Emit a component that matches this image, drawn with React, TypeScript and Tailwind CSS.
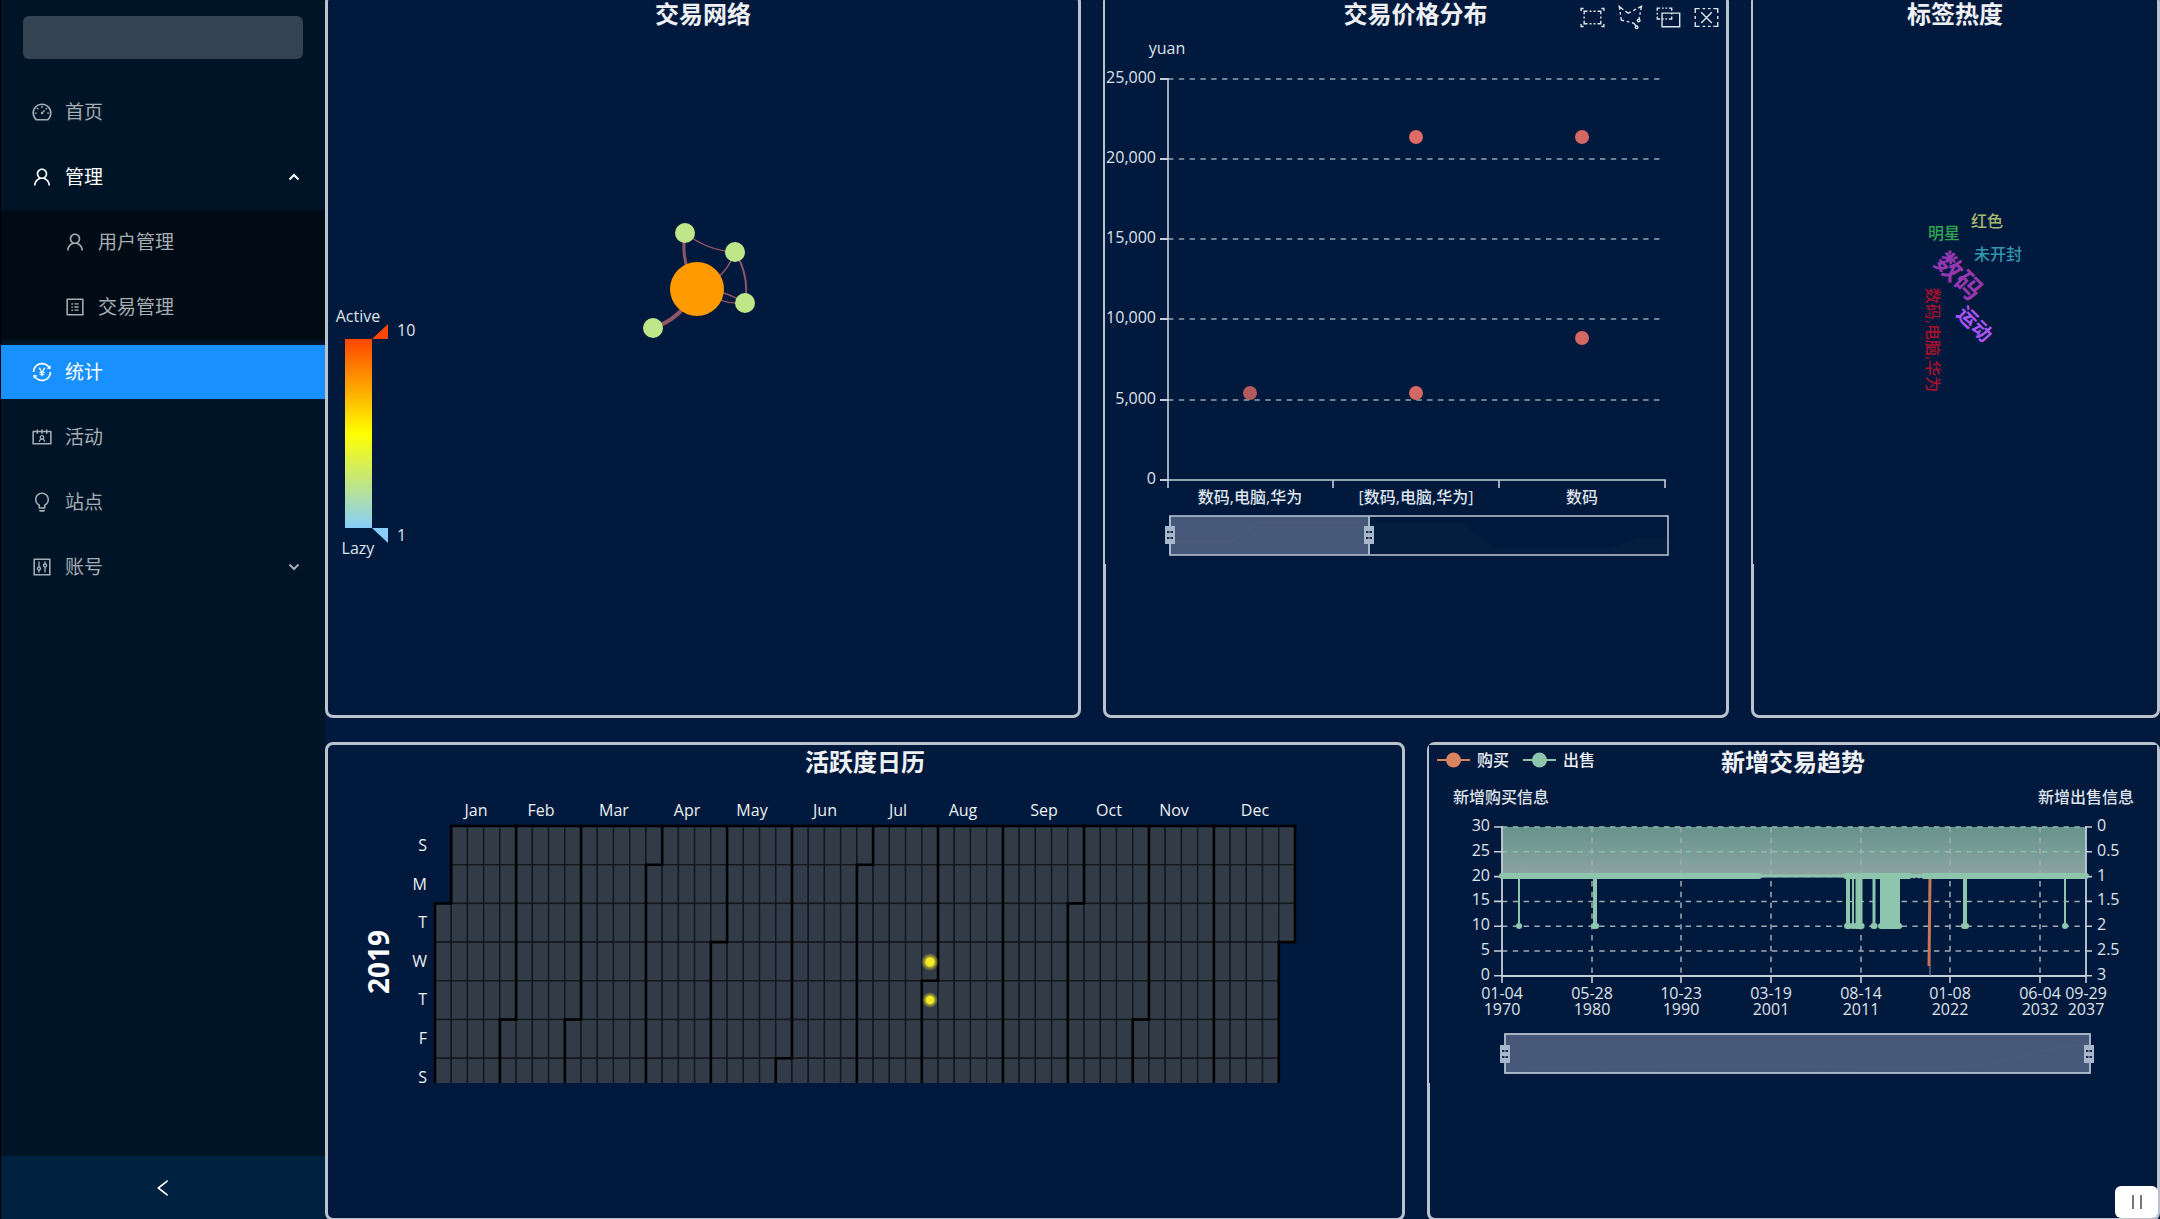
import type { ReactNode } from "react";
import type { IconType } from "react-icons";
import {
  AiOutlineBulb,
  AiOutlineContacts,
  AiOutlineControl,
  AiOutlineDashboard,
  AiOutlineLeft,
  AiOutlineProfile,
  AiOutlineTransaction,
  AiOutlineUser,
} from "react-icons/ai";

/* ---------- sidebar ---------- */

function Chevron({ up }: { up?: boolean }) {
  return (
    <svg viewBox="0 0 12 8" className="ml-auto h-2 w-3" fill="none" stroke="currentColor" strokeWidth="2">
      <path d={up ? "M1.5 6.5 6 2l4.5 4.5" : "M1.5 1.5 6 6l4.5-4.5"} />
    </svg>
  );
}

type ItemProps = {
  icon: IconType;
  label: string;
  nested?: boolean;
  selected?: boolean;
  open?: boolean;
  expandable?: boolean;
};

function MenuItem({ icon: Icon, label, nested, selected, open, expandable }: ItemProps) {
  const tone = selected ? "bg-[#1890ff] text-white" : open ? "text-white" : "text-[#a6adb4]";
  const inset = nested ? "pl-[63px]" : "pl-[30px]";
  const cls = `mt-[5px] mb-[6px] flex h-[54px] w-full items-center gap-3 pr-[25px] text-[19px] ${inset} ${tone}`;
  const body = (
    <>
      <Icon className="size-[22px] shrink-0" />
      <span>{label}</span>
      {expandable && <Chevron up={open} />}
    </>
  );
  return expandable ? (
    <button type="button" aria-expanded={!!open} className={cls}>
      {body}
    </button>
  ) : (
    <a href="#" className={cls}>
      {body}
    </a>
  );
}

function Sidebar() {
  return (
    <aside className="flex w-[325px] shrink-0 flex-col border-l border-black bg-[#001427]">
      <div className="px-[22px] pt-4">
        <input aria-label="搜索" className="h-[43px] w-full rounded-md bg-[#344351] px-3 text-white outline-none" />
      </div>
      <nav className="mt-[21px] flex flex-col">
        <MenuItem icon={AiOutlineDashboard} label="首页" />
        <MenuItem icon={AiOutlineUser} label="管理" expandable open />
        <div className="flex flex-col bg-[#000b15]">
          <MenuItem icon={AiOutlineUser} label="用户管理" nested />
          <MenuItem icon={AiOutlineProfile} label="交易管理" nested />
        </div>
        <MenuItem icon={AiOutlineTransaction} label="统计" selected />
        <MenuItem icon={AiOutlineContacts} label="活动" />
        <MenuItem icon={AiOutlineBulb} label="站点" />
        <MenuItem icon={AiOutlineControl} label="账号" expandable />
      </nav>
      <button
        type="button"
        aria-label="收起菜单"
        className="mt-auto flex h-[63px] items-center justify-center bg-[#002140] text-white"
      >
        <AiOutlineLeft className="size-[22px]" />
      </button>
    </aside>
  );
}

/* ---------- card ---------- */

type CardProps = {
  title: string;
  left?: ReactNode;
  right?: ReactNode;
  overlap?: boolean;
  children: ReactNode;
};

function Card({ title, left, right, overlap, children }: CardProps) {
  return (
    <section className="min-w-0 rounded-lg border-3 border-[#bac2cd]">
      <div className={overlap ? "-ml-px bg-[#00193c]" : ""}>
        <header className="grid h-[34px] grid-cols-[1fr_auto_1fr] items-center">
          <div>{left}</div>
          <h2 className="text-2xl leading-7 font-bold text-[#eef0f4]">{title}</h2>
          <div>{right}</div>
        </header>
        {children}
      </div>
    </section>
  );
}

type LabelProps = {
  x: number;
  y: number;
  anchor?: "start" | "middle" | "end";
  fill?: string;
  children: ReactNode;
};

/* 16px chart label, vertically centred on y */
function Label({ x, y, anchor = "middle", fill = "#dfe4ec", children }: LabelProps) {
  return (
    <text x={x} y={y + 6} textAnchor={anchor} fill={fill} fontSize="16" fontWeight="500">
      {children}
    </text>
  );
}

function Grip({ x, y }: { x: number; y: number }) {
  return (
    <g>
      <rect x={x - 5} y={y - 9} width="10" height="18" fill="#a7b7cc" />
      <path d={`M${x - 3} ${y - 3}h2.5m1 0h2.5M${x - 3} ${y + 3}h2.5m1 0h2.5`} stroke="#1c2c48" strokeWidth="2" />
    </g>
  );
}

/* ---------- network ---------- */

const leafNodes = [
  [357, 202],
  [407, 221],
  [417, 272],
  [325, 297],
];

function NetworkChart() {
  return (
    <svg viewBox="0 0 750 533" className="w-full">
      <defs>
        <linearGradient id="heat" x1="0" y1="0" x2="0" y2="1">
          <stop offset="0" stopColor="#ff4500" />
          <stop offset="0.5" stopColor="#ffff00" />
          <stop offset="1" stopColor="#87cefa" />
        </linearGradient>
      </defs>
      <Label x={30} y={285}>Active</Label>
      <rect x="17" y="308" width="27" height="189" fill="url(#heat)" />
      <path d="M44 308h16v-15z" fill="#ff4500" />
      <path d="M44 497h16v15z" fill="#87cefa" />
      <Label x={69} y={299} anchor="start">10</Label>
      <Label x={69} y={504} anchor="start">1</Label>
      <Label x={30} y={517}>Lazy</Label>
      <g fill="none" stroke="#8f5666">
        <path d="M357 202Q380 220 407 221" strokeWidth="1.5" />
        <path d="M407 221Q422 245 417 272" strokeWidth="2" />
        <path d="M369 258Q396 250 407 221" strokeWidth="1.5" />
        <path d="M369 258Q395 258 417 272" strokeWidth="1.5" />
        <path d="M369 258Q392 274 417 272" strokeWidth="1.5" />
        <path d="M369 258Q352 232 357 202" strokeWidth="3" />
        <path d="M369 258Q353 288 325 297" strokeWidth="4" />
      </g>
      {leafNodes.map(([x, y]) => (
        <circle key={x} cx={x} cy={y} r="10" fill="#bfe78a" />
      ))}
      <circle cx="369" cy="258" r="27" fill="#ff9a00" />
    </svg>
  );
}

/* ---------- price scatter ---------- */

const brushTools = [
  {
    name: "矩形选择",
    box: "0 -1 90 72",
    d: "M0.4,10V-0.2h9.8 M89.6,10V-0.2h-9.8 M0.4,60v10.2h9.8 M89.6,60v10.2h-9.8 M12.3,22.4V10.5h13.1 M33.6,10.5h7.8 M49.1,10.5h7.8 M77.5,22.4V10.5h-13 M12.3,31.1v8.2 M77.7,31.1v8.2 M12.3,47.6v11.9h13.1 M33.6,59.5h7.6 M49.1,59.5h7.7 M77.5,47.6v11.9h-13",
  },
  {
    name: "圈选",
    box: "9 4 54 54",
    d: "M55.2,34.9c1.7,0,3.1,1.4,3.1,3.1s-1.4,3.1-3.1,3.1s-3.1-1.4-3.1-3.1S53.5,34.9,55.2,34.9z M50.4,51c1.7,0,3.1,1.4,3.1,3.1c0,1.7-1.4,3.1-3.1,3.1c-1.7,0-3.1-1.4-3.1-3.1C47.3,52.4,48.7,51,50.4,51z M55.6,37.1l1.5-7.8 M60.1,13.5l1.6-8.7l-7.8,4 M59,19l-1,5.3 M24,16.1l6.4,4.9l6.4-3.3 M48.5,11.6l-5.9,3.1 M19.1,12.8L9.7,5.1l1.1,7.7 M13.4,29.8l1,7.3l6.6,1.6 M11.6,18.4l1,6.1 M27.3,40.2l6.1,1.6 M49.9,52.1l-5.6-7.6l-4.9-1.2",
  },
  {
    name: "保持选择",
    box: "3 0 82 69",
    d: "M4,10.5V1h10.3 M20.7,1h6.1 M33,1h6.1 M55.4,10.5V1H45.2 M4,17.3v6.6 M55.6,17.3v6.6 M4,30.5V40h10.3 M20.7,40h6.1 M33,40h6.1 M55.4,30.5V40H45.2 M21,18.9h62.9v48.6H21V18.9z",
  },
  {
    name: "清除选择",
    box: "4 3 67 54",
    d: "M22,14.7l30.9,31 M52.9,14.7L22,45.7 M4.7,16.8V4.2h13.1 M26,4.2h7.8 M41.6,4.2h7.8 M70.3,16.8V4.2H57.2 M4.7,25.9v8.6 M70.3,25.9v8.6 M4.7,43.2v12.6h13.1 M26,55.8h7.8 M41.6,55.8h7.8 M70.3,43.2v12.6H57.2",
  },
];

function BrushToolbox() {
  return (
    <div className="flex justify-end gap-[15px] pt-1.5 pr-2">
      {brushTools.map((t) => (
        <button key={t.name} type="button" aria-label={t.name} className="size-[23px]">
          <svg viewBox={t.box} className="size-full overflow-visible" fill="none" stroke="#dfe4ec">
            <path d={t.d} vectorEffect="non-scaling-stroke" strokeWidth="1.4" />
          </svg>
        </button>
      ))}
    </div>
  );
}

const prices = ["25,000", "20,000", "15,000", "10,000", "5,000", "0"];
const priceY = [48, 128, 208, 288, 369, 449];
const categories = ["数码,电脑,华为", "[数码,电脑,华为]", "数码"];
const categoryX = [145, 311, 477];
const deals = [
  [145, 362, 0.8],
  [311, 362, 0.95],
  [311, 106, 1],
  [477, 307, 0.95],
  [477, 106, 0.95],
];

function PriceChart() {
  return (
    <svg viewBox="0 0 621 533" className="w-full">
      <Label x={62} y={17}>yuan</Label>
      {prices.map((p, i) => (
        <g key={p}>
          <Label x={51} y={priceY[i] - 2} anchor="end">{p}</Label>
          <path d={`M55 ${priceY[i]}h8`} stroke="#c6cdd8" strokeWidth="2" />
          {i < 5 && (
            <path
              d={`M63 ${priceY[i]}H558`}
              stroke="#98a2b0"
              strokeWidth="1.5"
              strokeDasharray="5.4 5.4"
            />
          )}
        </g>
      ))}
      <path d="M63 47V457M63 449H560V457M228 449v8M394 449v8" fill="none" stroke="#c6cdd8" strokeWidth="1.6" />
      {categories.map((c, i) => (
        <Label key={c} x={categoryX[i]} y={466}>{c}</Label>
      ))}
      {deals.map(([x, y, o], i) => (
        <circle key={i} cx={x} cy={y} r="7" fill="#dd6b66" fillOpacity={o} />
      ))}
      <path
        d="M65 511H126L153 492H358L389 517H505L532 507H562V524H65z"
        fill="#ffffff"
        fillOpacity="0.02"
      />
      <rect x="65" y="485" width="199" height="39" fill="#46597a" />
      <path d="M65 511H126L153 492H264" fill="none" stroke="#4e5f7b" />
      <rect x="65" y="485" width="498" height="39" fill="none" stroke="#b3bfcf" strokeWidth="1.6" />
      <path d="M65 485v39M264 485v39" stroke="#a7b7cc" strokeWidth="2" />
      <Grip x={65} y={504} />
      <Grip x={264} y={504} />
    </svg>
  );
}

/* ---------- word cloud ---------- */

const words = [
  { text: "红色", x: 234, y: 190, size: 16, angle: 0, color: "#a8b86c", weight: 500 },
  { text: "明星", x: 191, y: 202, size: 16, angle: 0, color: "#2fa653", weight: 500 },
  { text: "未开封", x: 245, y: 223, size: 16, angle: 0, color: "#3296ae", weight: 500 },
  { text: "数码", x: 206, y: 245, size: 27, angle: 45, color: "#9537b0", weight: 700 },
  { text: "运动", x: 222, y: 293, size: 20, angle: 45, color: "#ab55f7", weight: 700 },
  { text: "数码,电脑,华为", x: 180, y: 309, size: 16, angle: 90, color: "#a8122d", weight: 500 },
];

function WordCloud() {
  return (
    <svg viewBox="0 0 404 533" className="w-full">
      {words.map((w) => (
        <text
          key={w.text}
          transform={`translate(${w.x} ${w.y}) rotate(${w.angle})`}
          y={w.size * 0.37}
          textAnchor="middle"
          fontSize={w.size}
          fontWeight={w.weight}
          fill={w.color}
        >
          {w.text}
        </text>
      ))}
    </svg>
  );
}

/* ---------- activity calendar ---------- */

const CELL_W = 860 / 53;
const CELL_H = 38.7;
const ORIGIN_X = 107;
const ORIGIN_Y = 47;
const FIRST_WEEKDAY = 2;
const monthNames: [string, number][] = [
  ["Jan", 148],
  ["Feb", 213],
  ["Mar", 286],
  ["Apr", 359],
  ["May", 424],
  ["Jun", 497],
  ["Jul", 570],
  ["Aug", 635],
  ["Sep", 716],
  ["Oct", 781],
  ["Nov", 846],
  ["Dec", 927],
];
const monthStarts = [0, 31, 59, 90, 120, 151, 181, 212, 243, 273, 304, 334, 365];
const weekdays = ["S", "M", "T", "W", "T", "F", "S"];

function monthEdge(day: number) {
  const slot = day + FIRST_WEEKDAY;
  const x = ORIGIN_X + Math.floor(slot / 7) * CELL_W;
  const row = slot % 7;
  const bottom = ORIGIN_Y + 7 * CELL_H;
  if (row === 0) return `M${x} ${ORIGIN_Y}V${bottom}`;
  return `M${x + CELL_W} ${ORIGIN_Y}V${ORIGIN_Y + row * CELL_H}H${x}V${bottom}`;
}

function CalendarChart() {
  const days = Array.from({ length: 365 }, (_, i) => i + FIRST_WEEKDAY);
  return (
    <svg viewBox="0 0 1074 304" className="w-full">
      <defs>
        <radialGradient id="glow">
          <stop offset="0" stopColor="#f4e925" />
          <stop offset="0.45" stopColor="#f4e925" />
          <stop offset="0.6" stopColor="#f4e925" stopOpacity="0.55" />
          <stop offset="1" stopColor="#f4e925" stopOpacity="0" />
        </radialGradient>
      </defs>
      {monthNames.map(([m, x]) => (
        <Label key={m} x={x} y={31} fill="#eef0f4">{m}</Label>
      ))}
      {weekdays.map((d, i) => (
        <Label key={i} x={99} y={66 + i * 38.6} anchor="end" fill="#eef0f4">{d}</Label>
      ))}
      <text
        transform="translate(51 183) rotate(-90)"
        y="10"
        textAnchor="middle"
        fontSize="28"
        fontWeight="700"
        fill="#ffffff"
      >
        2019
      </text>
      <g fill="#323c48" stroke="#12171c" strokeWidth="1.4">
        {days.map((s) => (
          <rect
            key={s}
            x={ORIGIN_X + Math.floor(s / 7) * CELL_W}
            y={ORIGIN_Y + (s % 7) * CELL_H}
            width={CELL_W}
            height={CELL_H}
          />
        ))}
      </g>
      <g fill="none" stroke="#000000" strokeWidth="2.6" strokeLinecap="square">
        {monthStarts.map((d) => (
          <path key={d} d={monthEdge(d)} />
        ))}
        <path d={`M${ORIGIN_X + CELL_W} ${ORIGIN_Y}H${ORIGIN_X + 53 * CELL_W}`} />
      </g>
      <circle cx="602" cy="183" r="9" fill="url(#glow)" />
      <circle cx="602" cy="221" r="8" fill="url(#glow)" />
    </svg>
  );
}

/* ---------- trend ---------- */

function TrendLegend() {
  const series: [string, string][] = [
    ["购买", "#d98361"],
    ["出售", "#8dc6ad"],
  ];
  return (
    <div className="flex gap-3.5 pb-1 pl-2">
      {series.map(([name, color]) => (
        <button
          key={name}
          type="button"
          className="flex items-center gap-[7px] text-base leading-6 font-medium text-[#eef0f4]"
        >
          <svg viewBox="0 0 33 16" className="h-4 w-[33px]">
            <path d="M0 8h33" stroke={color} strokeWidth="2" />
            <circle cx="16.5" cy="8" r="7.5" fill={color} />
          </svg>
          {name}
        </button>
      ))}
    </div>
  );
}

const leftScale = ["30", "25", "20", "15", "10", "5", "0"];
const rightScale = ["0", "0.5", "1", "1.5", "2", "2.5", "3"];
const dates: [string, string, number][] = [
  ["01-04", "1970", 73],
  ["05-28", "1980", 163],
  ["10-23", "1990", 252],
  ["03-19", "2001", 342],
  ["08-14", "2011", 432],
  ["01-08", "2022", 521],
  ["06-04", "2032", 611],
  ["09-29", "2037", 657],
];
/* x and stroke width of every drop from 1 down to 2 */
const drops: [number, number][] = [
  [90, 2],
  [166, 4],
  [419, 4],
  [424, 2],
  [430, 7],
  [445, 3],
  [461, 20],
  [536, 4],
  [636, 2],
];

function TrendChart() {
  const rowY = (i: number) => 48 + i * 24.8;
  return (
    <svg viewBox="0 0 728 304" className="w-full">
      <defs>
        <linearGradient id="sell" x1="0" y1="0" x2="0" y2="1">
          <stop offset="0" stopColor="#66948c" />
          <stop offset="1" stopColor="#8ca4a2" />
        </linearGradient>
      </defs>
      <Label x={24} y={18} anchor="start">新增购买信息</Label>
      <Label x={705} y={18} anchor="end">新增出售信息</Label>
      <rect x="73" y="48" width="584" height="49" fill="url(#sell)" />
      <g stroke="#a3acb5" strokeWidth="1.5" strokeDasharray="5.4 5.4">
        {leftScale.slice(0, 6).map((v, i) => (
          <path key={v} d={`M73 ${rowY(i)}H657`} stroke={i < 2 ? "#8dc0ab" : undefined} />
        ))}
        {dates.slice(1, 7).map(([d, , x]) => (
          <path key={d} d={`M${x} 48V197`} />
        ))}
      </g>
      {leftScale.map((v, i) => (
        <g key={v} stroke="#c6cdd8" strokeWidth="1.6">
          <path d={`M65 ${rowY(i)}h8M657 ${rowY(i)}h6`} />
          <g stroke="none">
            <Label x={61} y={rowY(i) - 2} anchor="end">{v}</Label>
            <Label x={668} y={rowY(i) - 2} anchor="start">{rightScale[i]}</Label>
          </g>
        </g>
      ))}
      <path d="M73 47V197H657V47" fill="none" stroke="#c6cdd8" strokeWidth="1.8" />
      {dates.map(([d, year, x]) => (
        <g key={d}>
          <path d={`M${x} 197v7`} stroke="#c6cdd8" strokeWidth="1.6" />
          <Label x={x} y={214}>{d}</Label>
          <Label x={x} y={230}>{year}</Label>
        </g>
      ))}
      <path d="M501 97 500 187" stroke="#c8765a" strokeWidth="3" />
      <path d="M501 187v10" stroke="#8a93a0" />
      <g stroke="#8dc6ad" fill="#8dc6ad">
        <path d="M73 97H657" strokeWidth="3" />
        <path d="M73 97H330M417 97H480M495 97H657" strokeWidth="6" strokeLinecap="round" />
        <circle cx="485" cy="97" r="2" />
        <circle cx="490" cy="97" r="2" />
        {drops.map(([x, w]) => (
          <g key={x}>
            <path d={`M${x} 97V147`} strokeWidth={w} />
            <path d={`M${x - w / 2 + 1} 147H${x + w / 2 - 0.9}`} strokeWidth="6" strokeLinecap="round" />
          </g>
        ))}
      </g>
      <rect x="76" y="255" width="585" height="39" fill="#46597a" stroke="#b3bfcf" strokeWidth="1.8" />
      <path d="M77 288C200 290 240 284 420 288S540 282 660 264" fill="none" stroke="#4c5d7b" />
      <Grip x={76} y={275} />
      <Grip x={660} y={275} />
    </svg>
  );
}

/* ---------- page ---------- */

export default function App() {
  return (
    <div className="relative flex h-screen overflow-hidden bg-[#00193c] font-['Open_Sans','Noto_Sans_CJK_SC',sans-serif]">
      <Sidebar />
      <main className="-mt-1.5 -mb-0.5 flex min-w-0 flex-1 flex-col gap-6">
        <div className="grid min-h-[724px] grid-cols-[756fr_626fr_409fr] gap-[22px]">
          <Card title="交易网络">
            <NetworkChart />
          </Card>
          <Card title="交易价格分布" right={<BrushToolbox />} overlap>
            <PriceChart />
          </Card>
          <Card title="标签热度" overlap>
            <WordCloud />
          </Card>
        </div>
        <div className="grid flex-1 grid-cols-[1080fr_733fr] gap-[22px]">
          <Card title="活跃度日历">
            <CalendarChart />
          </Card>
          <Card title="新增交易趋势" left={<TrendLegend />} overlap>
            <TrendChart />
          </Card>
        </div>
      </main>
      <button
        type="button"
        aria-label="暂停"
        className="absolute right-0.5 bottom-px flex h-8 w-[43px] items-center justify-center gap-1.5 rounded-md bg-white"
      >
        <span className="h-3.5 w-0.5 bg-[#777]" />
        <span className="h-3.5 w-0.5 bg-[#777]" />
      </button>
    </div>
  );
}
